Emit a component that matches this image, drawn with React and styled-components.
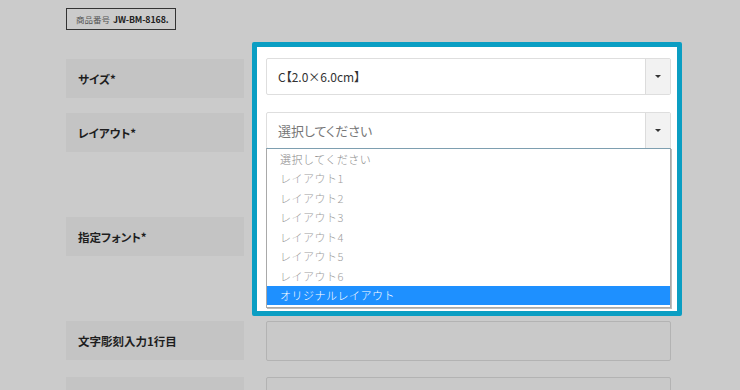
import React from 'react';
import styled, { createGlobalStyle } from 'styled-components';

const GlobalStyle = createGlobalStyle`
  html, body {
    margin: 0;
    padding: 0;
    background: #cbcbcb;
    font-family: "Noto Sans CJK JP", "Noto Sans", sans-serif;
  }
`;

const Page = styled.div`
  width: 740px;
  height: 390px;
  overflow: hidden;
  box-sizing: border-box;
  padding: 8px 0 0 66px;
  background: #cbcbcb;
`;

const ProductCode = styled.div`
  display: flex;
  align-items: center;
  gap: 3px;
  box-sizing: border-box;
  width: 110px;
  height: 22px;
  padding-left: 9px;
  border: 1px solid #333;
  white-space: nowrap;
  font-size: 8.5px;
  color: #555;
  b {
    font-size: 8.8px;
    color: #222;
    font-weight: 700;
    letter-spacing: -0.1px;
  }
`;

const Form = styled.div`
  position: relative;
  margin-top: 29px;
  display: flex;
  flex-direction: column;
  gap: 15px;
  width: 605px;
`;

const Spotlight = styled.div`
  position: absolute;
  left: 186px;
  top: -17px;
  width: 430px;
  height: 274px;
  box-sizing: border-box;
  border: 5px solid #0b9ec3;
  border-radius: 2px;
  background: #fff;
  z-index: 0;
`;

const Row = styled.div`
  position: relative;
  z-index: ${(p) => p.$layer || 1};
  display: grid;
  grid-template-columns: 178px 405px;
  column-gap: 22px;
  align-items: ${(p) => (p.$center ? 'center' : 'start')};
  height: ${(p) => p.$height || 39}px;
`;

const Label = styled.div`
  display: flex;
  align-items: center;
  height: 39px;
  padding-left: 12px;
  background: #c4c4c4;
  font-size: 11.5px;
  font-weight: 700;
  color: #1e1e1e;
  font-feature-settings: "palt";
`;

const SelectBox = styled.div`
  position: relative;
  display: flex;
  height: 37px;
  margin-top: -1px;
  box-sizing: border-box;
  border: 1px solid #dedede;
  border-radius: 2px;
  background: #fff;
`;

const SelectValue = styled.div`
  flex: 1;
  display: flex;
  align-items: center;
  padding-left: 11px;
  font-size: ${(p) => (p.$placeholder ? 13 : 12)}px;
  color: ${(p) => (p.$placeholder ? '#777' : '#333')};
  font-feature-settings: "palt";
`;

const ArrowButton = styled.div`
  width: 24px;
  display: flex;
  align-items: center;
  justify-content: center;
  background: #f2f2f2;
  border-left: 1px solid #dcdcdc;
  &::after {
    content: '';
    border-left: 3px solid transparent;
    border-right: 3px solid transparent;
    border-top: 3px solid #333;
  }
`;

const OptionList = styled.ul`
  position: absolute;
  left: -1px;
  right: -1px;
  top: 100%;
  margin: 0;
  padding: 0 0 2px;
  list-style: none;
  background: #fff;
  border: 1px solid #a9a9a9;
  border-top-color: #7e9fb0;
  box-shadow: 1px 1px 0 #bdbdbd;
`;

const Option = styled.li`
  height: 19.5px;
  display: flex;
  align-items: center;
  padding-left: 13px;
  font-size: 11px;
  font-weight: 300;
  color: ${(p) => (p.$active ? '#fff' : p.$muted ? '#888' : '#9d9d9d')};
  background: ${(p) => (p.$active ? '#1e90ff' : 'transparent')};
  letter-spacing: 0.5px;
`;

const Blank = styled.div`
  height: 100%;
`;

const TextInput = styled.div`
  height: 40px;
  box-sizing: border-box;
  border: 1px solid #b3b3b3;
  border-radius: 2px;
  background: #c9c9c9;
`;

const layouts = [
  'レイアウト1',
  'レイアウト2',
  'レイアウト3',
  'レイアウト4',
  'レイアウト5',
  'レイアウト6',
];

export default function App() {
  return (
    <>
      <GlobalStyle />
      <Page>
        <ProductCode>
          商品番号 <b>JW-BM-8168.</b>
        </ProductCode>
        <Form>
          <Spotlight />
          <Row>
            <Label>サイズ*</Label>
            <SelectBox>
              <SelectValue>C【2.0×6.0cm】</SelectValue>
              <ArrowButton />
            </SelectBox>
          </Row>
          <Row $layer={2}>
            <Label>レイアウト*</Label>
            <SelectBox>
              <SelectValue $placeholder>選択してください</SelectValue>
              <ArrowButton />
              <OptionList>
                <Option $muted>選択してください</Option>
                {layouts.map((name) => (
                  <Option key={name}>{name}</Option>
                ))}
                <Option $active>オリジナルレイアウト</Option>
              </OptionList>
            </SelectBox>
          </Row>
          <Row $center $height={139}>
            <Label>指定フォント*</Label>
            <Blank />
          </Row>
          <Row $height={41}>
            <Label>文字彫刻入力1行目</Label>
            <TextInput />
          </Row>
          <Row>
            <Label />
            <TextInput />
          </Row>
        </Form>
      </Page>
    </>
  );
}
